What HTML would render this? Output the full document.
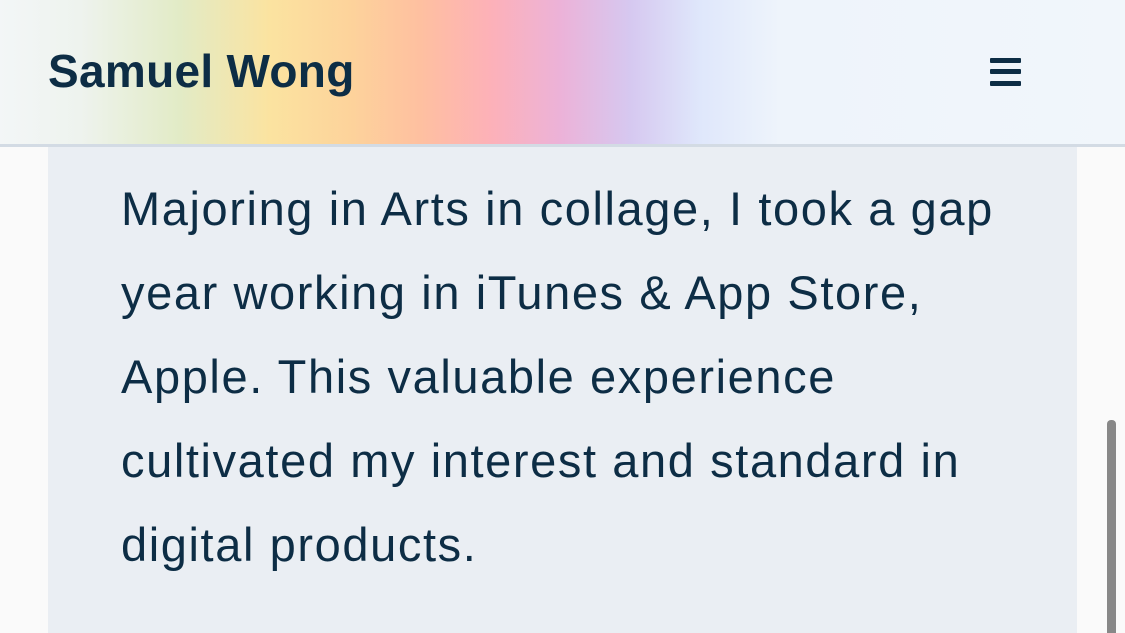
<!DOCTYPE html>
<html><head><style>
html,body{margin:0;padding:0;}
body{width:1125px;height:633px;overflow:hidden;background:#fafafa;position:relative;font-family:"Liberation Sans",sans-serif;}
.hdr{position:absolute;left:0;top:0;width:1125px;height:144px;
background:linear-gradient(90deg,#f3f6f7 0px,#eef3ee 80px,#e2ebc6 180px,#fbe3a0 270px,#fdd39b 350px,#fec0a0 420px,#fdb1b8 490px,#ecb2d8 560px,#d6c8f0 630px,#dfe7fb 700px,#eef4fb 780px,#f1f6fb 1125px);
border-bottom:3px solid #d3dbe4;}
.title{position:absolute;left:48px;top:44px;font-size:46px;font-weight:bold;color:#0d2d45;letter-spacing:0.3px;z-index:2;}
.hb{position:absolute;left:990px;width:31px;height:5px;background:#0d2d45;border-radius:1px;z-index:2;}
.panel{position:absolute;left:48px;top:147px;width:1029px;height:486px;background:#eaeef3;}
.txt{position:absolute;left:121px;top:167px;width:960px;font-size:47px;line-height:84px;letter-spacing:1.6px;color:#0d2d45;white-space:nowrap;}
.sb{position:absolute;left:1107px;top:420px;width:9px;height:213px;background:#888;border-radius:4px 4px 0 0;}
</style></head><body>
<div class="hdr"></div>
<div class="title">Samuel Wong</div>
<div class="hb" style="top:58px"></div>
<div class="hb" style="top:69px"></div>
<div class="hb" style="top:81px"></div>
<div class="panel"></div>
<div class="txt">Majoring in Arts in collage, I took a gap<br>year working in iTunes &amp; App Store,<br>Apple. This valuable experience<br>cultivated my interest and standard in<br>digital products.</div>
<div class="sb"></div>
</body></html>
